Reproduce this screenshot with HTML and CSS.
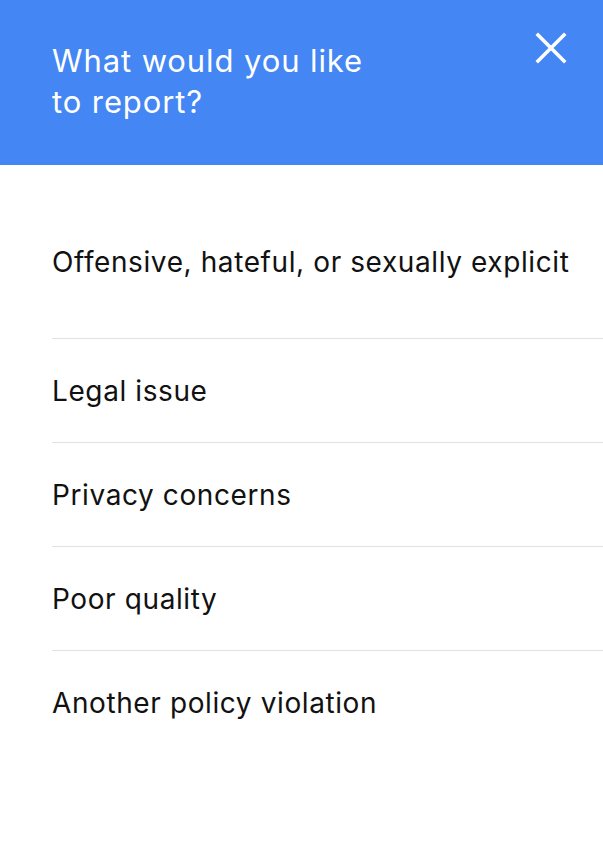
FILE: index.html
```html
<!DOCTYPE html>
<html>
<head>
<meta charset="utf-8">
<link rel="stylesheet" href="styles.css">
</head>
<body>
<div class="dialog">
  <header class="header">
    <h1 class="title">What would you like<br>to report?</h1>
    <button class="close" aria-label="Close">
      <svg width="32" height="32" viewBox="0 0 32 32"><path d="M3 3 L29 29 M29 3 L3 29" stroke="#fff" stroke-width="3.6" stroke-linecap="square" fill="none"/></svg>
    </button>
  </header>
  <ul class="list">
    <li class="item first">Offensive, hateful, or sexually explicit</li>
    <li class="item">Legal issue</li>
    <li class="item">Privacy concerns</li>
    <li class="item">Poor quality</li>
    <li class="item last">Another policy violation</li>
  </ul>
</div>
</body>
</html>
```

FILE: styles.css
```css
html, body {
  margin: 0;
  padding: 0;
  background: #fff;
}
body {
  font-family: Inter, Roboto, "Noto Sans", sans-serif;
  width: 603px;
  height: 868px;
  overflow: hidden;
}
.dialog {
  display: flex;
  flex-direction: column;
}
.header {
  background: #4386f4;
  height: 165px;
  box-sizing: border-box;
  padding: 40px 36px 0 52px;
  display: flex;
  justify-content: space-between;
  align-items: flex-start;
}
.title {
  margin: 0;
  color: #fff;
  font-weight: 400;
  font-size: 31px;
  line-height: 41px;
  letter-spacing: 0.9px;
}
.close {
  background: none;
  border: 0;
  padding: 0;
  margin-top: -8px;
  width: 32px;
  height: 32px;
  cursor: pointer;
}
.list {
  list-style: none;
  margin: 0;
  padding: 0 0 0 52px;
}
.item {
  font-size: 28px;
  letter-spacing: 0.6px;
  color: #111;
  line-height: 32px;
  height: 104px;
  box-sizing: border-box;
  padding-top: 36px;
  border-bottom: 1px solid #e2e2e2;
}
.item.first {
  height: 174px;
  padding-top: 81px;
}
.item.last {
  border-bottom: 0;
}
```
